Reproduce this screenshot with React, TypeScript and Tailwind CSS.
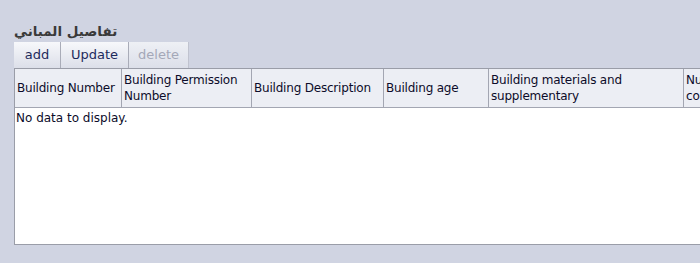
import React from "react";

const cols: { label: React.ReactNode; w: number }[] = [
  { label: "Building Number", w: 107 },
  { label: "Building Permission Number", w: 130 },
  { label: "Building Description", w: 132 },
  { label: "Building age", w: 105 },
  { label: "Building materials and supplementary", w: 195 },
  { label: "Number of floors completed", w: 120 },
];

export default function App() {
  return (
    <div
      className="w-[700px] h-[263px] bg-[#d0d4e2] overflow-hidden pl-[14px] pt-[21px]"
      style={{ fontFamily: "'DejaVu Sans', Tahoma, sans-serif" }}
    >
      <div
        className="h-[21px] text-[13.5px] font-bold text-[#3a3a3a] leading-[21px]"
        style={{ fontFamily: "'DejaVu Sans', 'Noto Sans', sans-serif" }}
      >
        تفاصيل المباني
      </div>
      <div className="flex h-[26px]">
        <button className="w-[47px] h-[26px] bg-gradient-to-b from-[#f7f8fb] to-[#dcdfe9] border-r border-[#a9acb8] text-[13px] text-[#1d2a5c]">
          add
        </button>
        <button className="w-[68px] h-[26px] bg-gradient-to-b from-[#f7f8fb] to-[#dcdfe9] border-r border-[#a9acb8] text-[13px] text-[#1d2a5c]">
          Update
        </button>
        <button className="w-[60px] h-[26px] bg-gradient-to-b from-[#eef0f5] to-[#dcdfe9] border-r border-[#c0c3cf] text-[13px] text-[#a4a8b8]">
          delete
        </button>
      </div>
      <div className="w-[720px] h-[177px] bg-white border-l border-t border-b border-[#9a9da8] flex flex-col">
        <div className="flex h-[39px] bg-[#eceef4] border-b border-[#a3a6b2]">
          {cols.map((c, i) => (
            <div
              key={i}
              className={
                "shrink-0 h-full border-r border-[#a3a6b2] px-[2px] flex items-center text-[12px] leading-[16px] text-[#0c0c2a] tracking-[-0.2px] overflow-hidden" +
                (i === 0 ? " whitespace-nowrap" : "")
              }
              style={{ width: c.w }}
            >
              {c.label}
            </div>
          ))}
        </div>
        <div className="px-[1px] pt-[2px] text-[12px] leading-[16px] text-[#0c0c2a]">
          No data to display.
        </div>
      </div>
    </div>
  );
}
